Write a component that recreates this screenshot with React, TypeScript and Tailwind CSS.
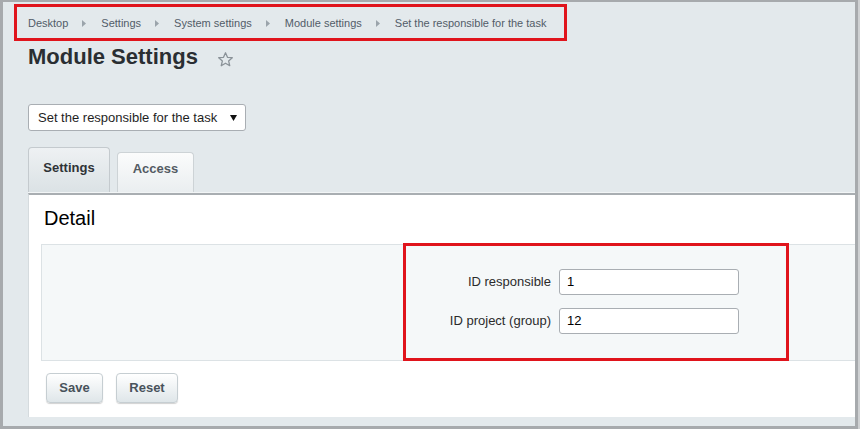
import React from "react";

// Admin "Module Settings" page: breadcrumb, title, module picker, tabbed form.
const crumbs = ["Desktop", "Settings", "System settings", "Module settings", "Set the responsible for the task"];
const fields = [
  { label: "ID responsible", value: "1" },
  { label: "ID project (group)", value: "12" },
];

function Arrow() {
  return (
    <svg width="4" height="7" viewBox="0 0 4 7" className="ml-[14px] mr-[15px] shrink-0">
      <path d="M0 0 L4 3.5 L0 7 Z" fill="#9ba4ab" />
    </svg>
  );
}

function Star() {
  return (
    <svg width="17" height="17" viewBox="0 0 24 24" className="ml-[19px] mt-[7px]">
      <path
        d="M12 2.5 L14.8 8.9 L21.6 9.5 L16.4 14 L18 20.8 L12 17.2 L6 20.8 L7.6 14 L2.4 9.5 L9.2 8.9 Z"
        fill="none"
        stroke="#8a9298"
        strokeWidth="1.8"
        strokeLinejoin="round"
      />
    </svg>
  );
}

function Button({ children, w }: { children: React.ReactNode; w: string }) {
  return (
    <div
      className={`${w} flex h-[30px] items-center justify-center rounded-[4px] border border-[#c6ced2] bg-gradient-to-b from-[#ffffff] to-[#dfe6e9] text-[13px] font-bold text-[#48525b] shadow-[0_1px_1px_rgba(0,0,0,0.18)]`}
    >
      {children}
    </div>
  );
}

export default function App() {
  return (
    <div className="relative h-[429px] w-[860px] overflow-hidden bg-[#cfd1d3]" style={{ fontFamily: '"Liberation Sans", Arial, sans-serif' }}>
      <div className="flex h-full w-[858px] flex-col border-b-[3px] border-l-[3px] border-r-[3px] border-t-2 border-[#a7aaad] bg-[#e3e9ec]">
        {/* breadcrumb */}
        <div className="flex h-[40px] items-center pl-[25px] pt-[2px] text-[11px] text-[#525c68]">
          {crumbs.map((c, i) => (
            <React.Fragment key={c}>
              {i > 0 && <Arrow />}
              <span className="whitespace-nowrap">{c}</span>
            </React.Fragment>
          ))}
        </div>

        {/* title */}
        <div className="mt-[2px] flex items-start pl-[25px]">
          <h1 className="text-[22px] font-bold leading-[26px] text-[#2a2e32]">Module Settings</h1>
          <Star />
        </div>

        {/* module picker */}
        <div className="ml-[25px] mt-[34px] flex h-[27px] w-[218px] items-center justify-between rounded-[3px] border border-[#a9aeb3] bg-white pl-[9px] pr-[8px] text-[13px] text-[#1e1e1e]">
          <span>Set the responsible for the task</span>
          <svg width="7" height="6" viewBox="0 0 7 6">
            <path d="M0 0 H7 L3.5 6 Z" fill="#111" />
          </svg>
        </div>

        {/* tabs */}
        <div className="ml-[25px] mt-[16px] flex h-[46px] items-end border-b border-[#f2f5f6]">
          <div className="flex h-[45px] w-[82px] justify-center rounded-t-[4px] border border-b-0 border-[#c4cace] bg-gradient-to-b from-[#eef1f3] to-[#dbe2e5] pt-[12px] text-[13px] font-bold leading-[15px] text-[#2f3337]">
            Settings
          </div>
          <div className="ml-[7px] flex h-[40px] w-[77px] justify-center rounded-t-[4px] border border-b-0 border-[#cdd3d6] bg-gradient-to-b from-[#fbfcfc] to-[#eaeef0] pt-[8px] text-[13px] font-bold leading-[15px] text-[#535b63]">
            Access
          </div>
        </div>

        {/* panel */}
        <div className="ml-[25px] flex h-[224px] flex-col border-t-2 border-l border-[#a9aeb2] border-l-[#d5dbde] bg-white">
          <div className="pl-[15px] pt-[11px] text-[20px] leading-[24px] text-black">Detail</div>

          <div className="ml-[12px] mt-[14px] border-y border-l border-[#dce2e5] bg-[#f5f8f9] pb-[26px] pt-[24px]">
            <div className="grid grid-cols-[509px_180px] items-center gap-x-[8px] gap-y-[13px]">
              {fields.map((f) => (
                <React.Fragment key={f.label}>
                  <span className="text-right text-[13px] text-[#2b2b2b]">{f.label}</span>
                  <div className="flex h-[26px] items-center rounded-[3px] border border-[#a9aeb3] bg-white pl-[7px] text-[13px] text-black">
                    {f.value}
                  </div>
                </React.Fragment>
              ))}
            </div>
          </div>

          <div className="ml-[17px] mt-[12px] flex gap-[13px]">
            <Button w="w-[57px]">Save</Button>
            <Button w="w-[62px]">Reset</Button>
          </div>
        </div>
      </div>

      {/* red annotation frames */}
      <div className="absolute left-[14px] top-[4px] h-[37px] w-[553px] border-[3px] border-[#e0141c]" />
      <div className="absolute left-[403px] top-[243px] h-[118px] w-[386px] border-[3px] border-[#e0141c]" />
    </div>
  );
}
